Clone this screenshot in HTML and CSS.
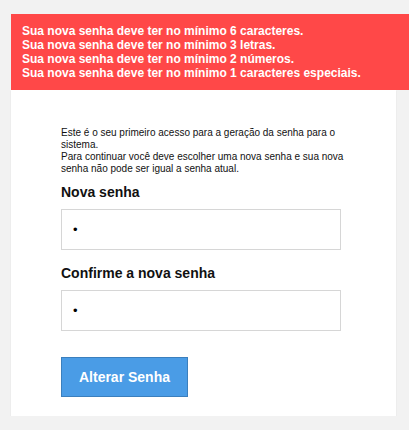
FILE: index.html
```html
<!DOCTYPE html>
<html lang="pt-BR">
<head>
<meta charset="utf-8">
<title>Alterar Senha</title>
<link rel="stylesheet" href="styles.css">
</head>
<body>
<div class="page">
  <div class="alert">
    <div>Sua nova senha deve ter no mínimo 6 caracteres.</div>
    <div>Sua nova senha deve ter no mínimo 3 letras.</div>
    <div>Sua nova senha deve ter no mínimo 2 números.</div>
    <div>Sua nova senha deve ter no mínimo 1 caracteres especiais.</div>
  </div>
  <div class="card">
    <form class="form">
      <p class="intro">Este é o seu primeiro acesso para a geração da senha para o sistema.<br>Para continuar você deve escolher uma nova senha e sua nova senha não pode ser igual a senha atual.</p>
      <label class="label" for="nova">Nova senha</label>
      <input class="field" id="nova" type="password" value="a">
      <label class="label label-second" for="conf">Confirme a nova senha</label>
      <input class="field" id="conf" type="password" value="a">
      <button class="btn" type="button">Alterar Senha</button>
    </form>
  </div>
</div>
</body>
</html>
```
FILE: styles.css
```css
html, body {
  margin: 0;
  padding: 0;
  background: #f2f2f2;
  font-family: "Liberation Sans", Arial, sans-serif;
}
.page {
  padding: 14px 0 0 11px;
  width: 398px;
  overflow: hidden;
}
.alert {
  background: #ff4848;
  color: #fff;
  font-weight: bold;
  font-size: 12px;
  line-height: 14px;
  padding: 10px 11px;
  width: 400px;
  box-sizing: border-box;
}
.card {
  width: 385px;
  background: #fff;
  box-sizing: border-box;
  padding: 37px 0 19px 50px;
  box-shadow: 0 1px 1px rgba(0,0,0,0.12);
}
.form {
  display: flex;
  flex-direction: column;
  align-items: flex-start;
  width: 292px;
}
.intro {
  margin: 0;
  font-size: 10px;
  line-height: 12px;
  color: #111;
}
.label {
  display: block;
  margin-top: 9px;
  font-size: 14px;
  line-height: 16px;
  font-weight: bold;
  color: #111;
}
.label-second {
  margin-top: 15px;
}
.field {
  margin: 9px 0 0 0;
  width: 280px;
  height: 41px;
  box-sizing: border-box;
  border: 1px solid #d6d6d6;
  padding: 0 11px;
  font-size: 13px;
  font-family: "Liberation Sans", Arial, sans-serif;
  color: #000;
  background: #fff;
  outline: none;
}
.btn {
  margin-top: 26px;
  width: 127px;
  height: 40px;
  background: #4a9ce6;
  border: 1px solid #3b7fbd;
  color: #fff;
  font-family: "Liberation Sans", Arial, sans-serif;
  font-weight: bold;
  font-size: 14px;
  padding: 0;
}
```
